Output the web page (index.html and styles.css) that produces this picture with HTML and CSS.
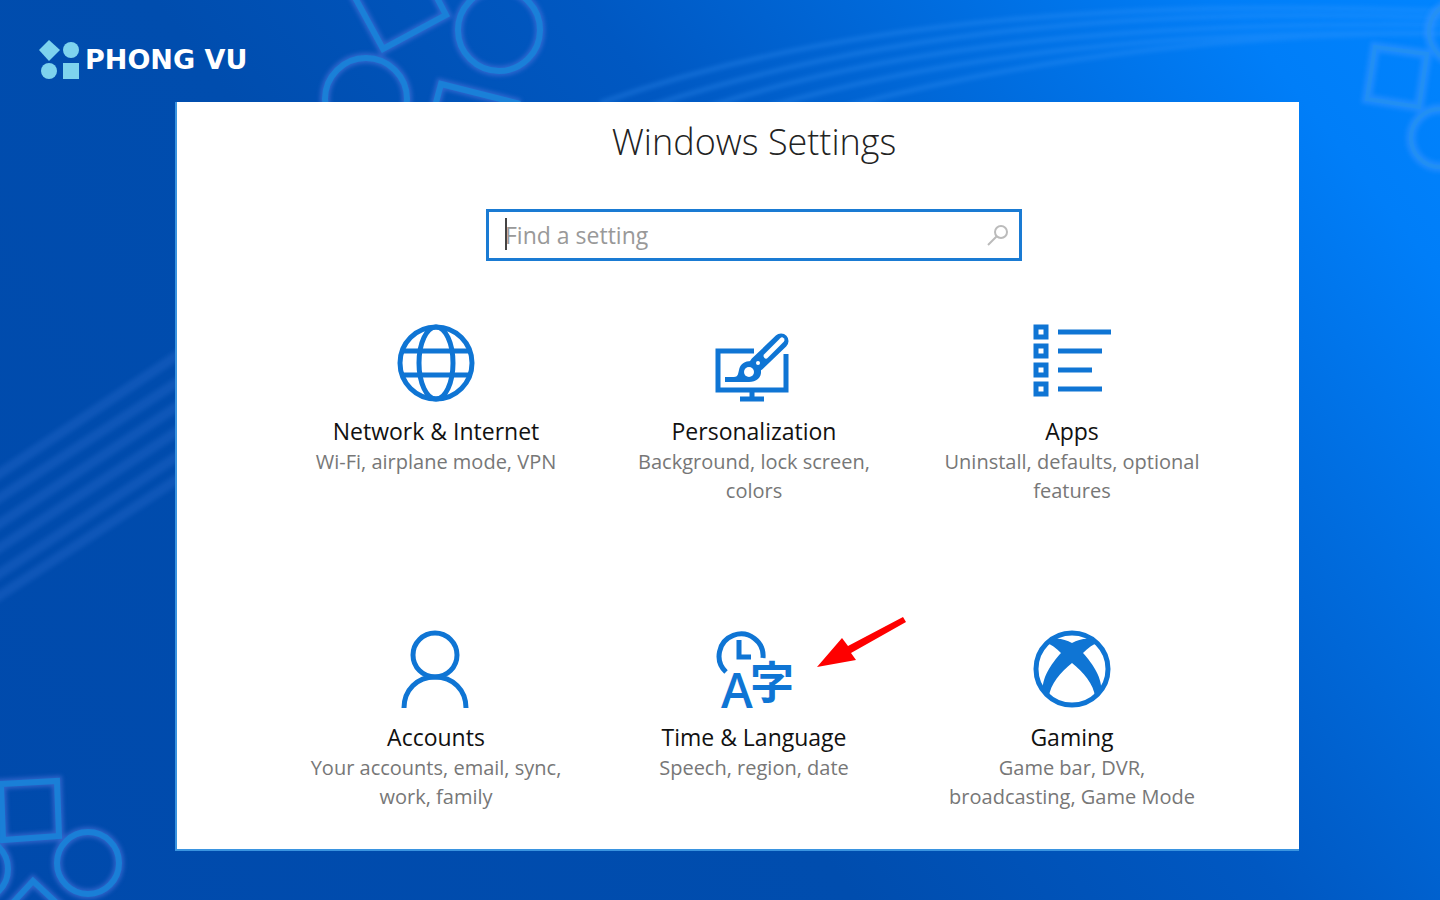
FILE: index.html
```html
<!DOCTYPE html>
<html lang="en">
<head>
    <meta charset="UTF-8">
    <meta name="viewport" content="width=device-width, initial-scale=1.0">
    <title>Windows Settings</title>
    <link rel="stylesheet" href="styles.css">
</head>
<body>
    <svg class="backdrop" viewBox="0 0 1440 900" preserveAspectRatio="xMidYMid slice" aria-hidden="true">
        <defs>
            <filter id="soft" x="-20%" y="-20%" width="140%" height="140%">
                <feGaussianBlur stdDeviation="2"/>
            </filter>
            <g id="shapes">
                <path d="M352 -8 L383 49 L446 15 L434 -8"/>
                <circle cx="499" cy="30" r="41"/>
                <circle cx="366" cy="99" r="41"/>
                <path d="M434 110 L441 84 L520 104"/>
                <path d="M1 784 L57 781 L59 836 L3 840 Z"/>
                <circle cx="88" cy="863" r="31"/>
                <circle cx="-23" cy="869" r="31"/>
                <path d="M8 908 L33 881 L62 908"/>
            </g>
            <g id="faint">
                <path d="M1375 47 L1427 54 L1419 107 L1367 99 Z"/>
                <circle cx="1440" cy="138" r="29"/>
                <circle cx="1460" cy="32" r="31"/>
            </g>
        </defs>
        <!-- ribbons -->
        <g class="ribbons" filter="url(#soft)">
            <path d="M-10 480 L190 347"/>
            <path d="M-10 504 L190 374"/>
            <path d="M-10 530 L190 398"/>
            <path d="M-10 554 L190 423"/>
            <path d="M-10 580 L190 448"/>
            <path d="M-10 602 L190 471"/>
        </g>
        <g class="ribbons thin" filter="url(#soft)">
            <path d="M600 103 C850 15 1150 0 1450 11"/>
            <path d="M650 106 C900 24 1180 8 1450 18"/>
            <path d="M710 106 C930 35 1200 22 1450 25"/>
            <path d="M770 106 C980 46 1220 30 1450 33"/>
            <path d="M840 108 C1040 54 1260 32 1450 34"/>
        </g>
        <use href="#shapes" class="glow" filter="url(#soft)"/>
        <use href="#shapes" class="line"/>
        <use href="#faint" class="glow pale" filter="url(#soft)"/>
        <use href="#faint" class="line pale"/>
    </svg>

    <header class="brand">
        <svg class="brand-mark" width="40" height="40" viewBox="0 0 40 40" aria-hidden="true">
            <path d="M10 0 L21 10 L10 21 L0 10 Z"/>
            <circle cx="32" cy="10" r="8"/>
            <circle cx="10" cy="31" r="8"/>
            <path d="M24 23 H40 V39 H24 Z"/>
        </svg>
        <span class="brand-name">PHONG VU</span>
    </header>

    <main class="panel">
        <h1>Windows Settings</h1>

        <form class="search">
            <input type="text" id="search" aria-label="Find a setting" placeholder="Find a setting">
            <span class="caret"></span>
            <button type="button" aria-label="Search">
                <svg width="22" height="22" viewBox="0 0 22 22">
                    <circle cx="14" cy="8" r="6"/>
                    <path d="M10 12 L1 21"/>
                </svg>
            </button>
        </form>

        <nav class="tiles">
            <a class="tile" href="#network">
                <svg class="icon" viewBox="0 0 78 78">
                    <circle cx="39" cy="39" r="36"/>
                    <ellipse cx="39" cy="39" rx="17" ry="36"/>
                    <path d="M6 27 H72 M6 51 H72"/>
                </svg>
                <h2>Network &amp; Internet</h2>
                <p>Wi-Fi, airplane mode, VPN</p>
            </a>
            <a class="tile" href="#personalization">
                <svg class="icon" viewBox="0 0 78 78">
                    <path d="M39 27 H3 V66 H71 V30"/>
                    <path d="M37 66 V75 M25 75 H49"/>
                    <path class="handle" d="M42 40 L66 17"/>
                    <path class="slit" d="M51 32 L67 16"/>
                    <path class="solid" d="M10 53 H19 C23 53 23 50 24 46 C25 40 30 37 36 37 L46 46 C47 54 41 58 34 58 H10 Z"/>
                    <circle class="hole" cx="34" cy="48" r="5"/>
                    <circle class="hole" cx="43" cy="39" r="2"/>
                </svg>
                <h2>Personalization</h2>
                <p>Background, lock screen, colors</p>
            </a>
            <a class="tile" href="#apps">
                <svg class="icon" viewBox="0 0 78 78">
                    <path d="M3 3 H13 V13 H3 Z M3 22 H13 V32 H3 Z M3 41 H13 V51 H3 Z M3 60 H13 V70 H3 Z"/>
                    <path d="M25 8 H78 M25 27 H69 M25 46 H59 M25 65 H69"/>
                </svg>
                <h2>Apps</h2>
                <p>Uninstall, defaults, optional features</p>
            </a>
            <a class="tile" href="#accounts">
                <svg class="icon" viewBox="0 0 78 78">
                    <circle cx="38" cy="25" r="22"/>
                    <path d="M7 78 C7 60 20 47 38 47 S69 60 69 78"/>
                </svg>
                <h2>Accounts</h2>
                <p>Your accounts, email, sync, work, family</p>
            </a>
            <a class="tile" href="#time">
                <svg class="icon" viewBox="0 0 78 78">
                    <path d="M11 42 A22 22 0 1 1 48 28"/>
                    <path d="M24 10 V27 H36"/>
                    <text class="latin" x="6" y="78">A</text>
                    <text class="kanji" x="35" y="69">字</text>
                </svg>
                <h2>Time &amp; Language</h2>
                <p>Speech, region, date</p>
                <svg class="arrow" width="90" height="52" viewBox="0 0 90 52" aria-hidden="true">
                    <path d="M0 50 L25 21 L31 29 L86 0 L89 5 L34 36 L39 43 Z"/>
                </svg>
            </a>
            <a class="tile" href="#gaming">
                <svg class="icon" viewBox="0 0 78 78">
                    <circle cx="39" cy="39" r="36"/>
                    <path class="solid" d="M13 13 C20 6 31 9 39 13 C47 9 58 6 65 13 C60 14 55 18 50 23 C60 34 70 49 68 62 L62 67 C61 54 50 42 39 33 C28 42 17 54 16 67 L10 62 C8 49 18 34 28 23 C23 18 18 14 13 13 Z"/>
                </svg>
                <h2>Gaming</h2>
                <p>Game bar, DVR, broadcasting, Game Mode</p>
            </a>
        </nav>
    </main>
</body>
</html>
```
FILE: styles.css
```css
* {
    box-sizing: border-box;
}
body {
    margin: 0;
    min-height: 100vh;
    font-family: "Open Sans", "Noto Sans", sans-serif;
    background: linear-gradient(52deg, #004aac 0%, #004dae 40%, #0058c2 60%, #006cde 76%, #007ef8 90%, #0084ff 100%);
}
.backdrop {
    position: absolute;
    top: 0;
    left: 0;
    width: 100%;
    height: 100%;
    z-index: -1;
    fill: none;
}
.ribbons {
    stroke: #2c6ccd;
    stroke-width: 10;
    opacity: 0.35;
}
.ribbons.thin {
    stroke: #4aa0ff;
    stroke-width: 5;
    opacity: 0.25;
}
.glow {
    stroke: #4f74dd;
    stroke-width: 10;
    opacity: 0.6;
}
.line {
    stroke: #1489dc;
    stroke-width: 6;
    opacity: 0.75;
}
.glow.pale {
    stroke: #3c95ff;
    opacity: 0.5;
}
.line.pale {
    stroke: #2492ee;
    stroke-width: 4;
    opacity: 0.6;
}
.brand {
    display: flex;
    align-items: center;
    gap: 6px;
    height: 102px;
    padding: 18px 39px 0;
}
.brand-mark {
    fill: #7dd3ee;
}
.brand-name {
    font-family: "DejaVu Sans", sans-serif;
    font-size: 27px;
    font-weight: bold;
    line-height: 40px;
    color: white;
}
.panel {
    margin: 0 141px 50px 175px;
    padding: 12px 0 35px 32px;
    background: white;
    border-left: 2px solid #3a94e0;
    border-bottom: 2px solid #3a94e0;
    text-align: center;
}
h1 {
    margin: 0;
    font-size: 36px;
    font-weight: 300;
    line-height: 56px;
    color: #222;
}
.search {
    position: relative;
    display: flex;
    align-items: center;
    max-width: 536px;
    height: 52px;
    margin: 39px auto 63px;
    border: 3px solid #1a7bd3;
}
.search input {
    flex: 1;
    min-width: 0;
    padding: 0 16px;
    border: none;
    outline: none;
    background: none;
    font-family: inherit;
    font-size: 23px;
    color: #333;
}
.search input::placeholder {
    color: #999;
    opacity: 1;
}
.search button {
    display: flex;
    padding: 0 10px;
    border: none;
    background: none;
    cursor: pointer;
}
.search button svg {
    fill: none;
    stroke: #bbb;
    stroke-width: 2;
}
.caret {
    position: absolute;
    left: 16px;
    top: 6px;
    width: 2px;
    height: 32px;
    background: #444;
}
.tiles {
    display: grid;
    grid-template-columns: repeat(3, 1fr);
    grid-auto-rows: 184px;
    row-gap: 122px;
    max-width: 954px;
    margin: 0 auto;
}
.tile {
    position: relative;
    display: flex;
    flex-direction: column;
    align-items: center;
    color: #777;
    text-decoration: none;
}
.icon {
    width: 78px;
    height: 78px;
    overflow: visible;
    fill: none;
    stroke: #0f75d4;
    stroke-width: 5;
}
.icon text {
    fill: #0f75d4;
    stroke: none;
}
.icon .latin {
    font-size: 48px;
    font-weight: 600;
}
.icon .kanji {
    font-family: "Noto Sans CJK JP", sans-serif;
    font-size: 44px;
    font-weight: bold;
}
.icon .solid {
    fill: #0f75d4;
    stroke: none;
}
.icon .hole {
    fill: white;
    stroke: none;
}
.icon .handle {
    stroke-width: 15;
    stroke-linecap: round;
}
.icon .slit {
    stroke: white;
    stroke-width: 5;
    stroke-linecap: round;
}
.tile h2 {
    margin: 13px 0 0;
    font-size: 23px;
    font-weight: 400;
    line-height: 32px;
    color: #111;
}
.tile p {
    max-width: 260px;
    margin: 0;
    font-size: 20px;
    line-height: 29px;
}
.arrow {
    position: absolute;
    left: 222px;
    top: -13px;
    fill: #fe0000;
}
```
